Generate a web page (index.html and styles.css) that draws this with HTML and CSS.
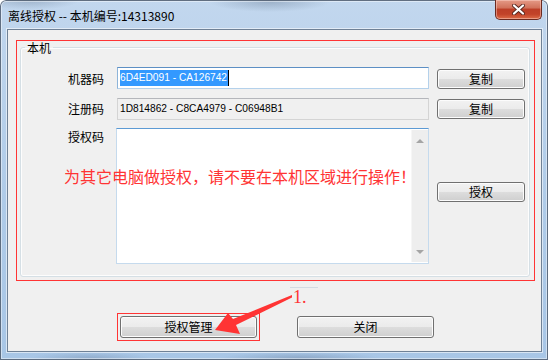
FILE: index.html
```html
<!DOCTYPE html>
<html>
    <head>
        <meta charset="UTF-8">
        <title>离线授权</title>
        <link rel="stylesheet" href="styles.css">
    </head>
    <body>
        <div class="window">
            <div class="titlebar">
                <span class="title">离线授权 -- 本机编号:14313890</span>
                <div class="close">
                    <svg width="13" height="11" viewBox="0 0 13 11">
                        <path d="M2 1.5 L11 9.5 M11 1.5 L2 9.5" stroke="#5a2a22" stroke-width="4" stroke-linecap="round"/>
                        <path d="M2 1.5 L11 9.5 M11 1.5 L2 9.5" stroke="#ffffff" stroke-width="2.2" stroke-linecap="round"/>
                    </svg>
                </div>
            </div>
            <div class="client">
                <div class="mark-box">
                    <fieldset class="group">
                        <legend>本机</legend>
                        <div class="form">
                            <label class="lbl">机器码</label>
                            <div class="field focus"><span class="sel">6D4ED091 - CA126742</span></div>
                            <button class="btn first">复制</button>

                            <label class="lbl">注册码</label>
                            <div class="field readonly">1D814862 - C8CA4979 - C06948B1</div>
                            <button class="btn">复制</button>

                            <label class="lbl top">授权码</label>
                            <div class="memo">
                                <div class="memo-body"></div>
                                <div class="vscroll">
                                    <span class="arr up"></span>
                                    <span class="arr down"></span>
                                </div>
                            </div>
                            <button class="btn mid">授权</button>
                        </div>
                    </fieldset>
                </div>
                <div class="actions">
                    <div class="mark-btn"><button class="btn wide">授权管理</button></div>
                    <button class="btn wide">关闭</button>
                </div>
            </div>

            <!-- 标注 -->
            <div class="note">为其它电脑做授权，请不要在本机区域进行操作！</div>
            <div class="step">1.</div>
            <svg class="arrow" width="548" height="360" viewBox="0 0 548 360">
                <polygon points="292,295 233,319 228,313 215,330 240,334 236,325 292,297.5" fill="#ff3434"/>
            </svg>
        </div>
    </body>
</html>
```

FILE: styles.css
```css
*{
    box-sizing: border-box;
}
body{
    margin: 0;
    font-family: "Noto Sans CJK SC", "Liberation Sans", sans-serif;
    font-size: 12px;
    color: #000;
}
.window{
    position: relative;
    width: 548px;
    height: 360px;
    overflow: hidden;
    background:
        radial-gradient(ellipse 60px 10px at 270px 2px, rgba(90,110,135,.35), transparent),
        radial-gradient(ellipse 50px 10px at 30px 0px, rgba(90,110,135,.35), transparent),
        radial-gradient(ellipse 80px 6px at 300px 358px, rgba(80,100,130,.3), transparent),
        radial-gradient(ellipse 60px 6px at 90px 358px, rgba(80,100,130,.25), transparent),
        linear-gradient(180deg, #c2d7ee 0%, #bfd5ed 30px, #afcbe8 200px, #a8c6e6 100%);
    box-shadow: inset 0 0 0 1px rgba(55,70,90,.75), inset 0 0 0 2px rgba(255,255,255,.45);
    border-radius: 6px 6px 0 0;
}
.titlebar{
    height: 29px;
    display: flex;
    justify-content: space-between;
    align-items: flex-start;
}
.title{
    padding: 9px 0 0 8px;
    line-height: 14px;
    font-size: 12px;
}
.close{
    width: 47px;
    height: 20px;
    margin-right: 6px;
    display: flex;
    align-items: center;
    justify-content: center;
    border: 1px solid #6b2a20;
    border-top: none;
    border-radius: 0 0 5px 5px;
    background: linear-gradient(180deg, #e59a86 0%, #d2735c 40%, #bd3f27 50%, #c24329 75%, #dc6c48 100%);
    box-shadow: inset 0 0 0 1px rgba(255,220,210,.45);
}
.client{
    height: 323px;
    margin: 0 6px 0 7px;
    padding: 10px 6px 0 8px;
    border: 1px solid #6f8196;
    background: #f0f0f0;
    box-shadow: 0 0 0 1px rgba(255,255,255,.55);
}
.mark-box{
    border: 1px solid #ff3434;
    padding: 0 4px 3px 3px;
}
.group{
    margin: 0;
    padding: 13px 0 12px 0;
    min-width: 0;
    border: 1px solid #d5dfe5;
    border-radius: 3px;
    box-shadow: inset 0 0 0 1px #fdfdfd;
}
.group legend{
    margin-left: 4px;
    padding: 0 2px;
    line-height: 13px;
    font-size: 12px;
}
.form{
    display: grid;
    grid-template-columns: 96px 312px 96px;
    grid-template-rows: 23px 22px 136px;
    row-gap: 8px;
}
.lbl{
    align-self: center;
    text-align: right;
    padding-right: 13px;
    line-height: 16px;
}
.lbl.top{
    align-self: start;
    line-height: 18px;
}
.field{
    height: 22px;
    align-self: start;
    padding: 2px 2px;
    font-family: "Liberation Sans", Arial, sans-serif;
    font-size: 10.2px;
    line-height: 16px;
    white-space: nowrap;
}
.field.focus{
    background: #fff;
    border: 1px solid #b4d1eb;
    border-top-color: #5d8fc4;
    border-left-color: #8db4d9;
}
.field.readonly{
    background: #f0f0f0;
    border: 1px solid #d4d4d4;
    border-top-color: #b4b6bb;
    padding-left: 2px;
}
.sel{
    display: inline-block;
    background: #3399ff;
    color: #fff;
    border-right: 1px solid #000;
    padding-right: 1px;
}
.btn{
    width: 88px;
    height: 20px;
    margin-left: 8px;
    padding: 0;
    border: 1px solid #707070;
    border-radius: 3px;
    background: linear-gradient(180deg, #f2f2f2 0%, #ebebeb 50%, #dddddd 50%, #cfcfcf 100%);
    box-shadow: inset 0 0 0 1px #fcfcfc;
    font-family: "Noto Sans CJK SC", sans-serif;
    font-size: 12px;
    line-height: 16px;
    color: #000;
    align-self: center;
}
.btn.first{
    align-self: start;
    margin-top: 2px;
}
.btn.mid{
    margin-bottom: 8px;
}
.memo{
    display: flex;
    margin-left: -1px;
    width: 313px;
    border: 1px solid #c5daed;
    border-top-color: #5c9ad4;
    background: #fff;
}
.memo-body{
    flex: 1;
}
.vscroll{
    width: 17px;
    margin: 1px 0;
    background: #eeeeee;
    border-left: 1px solid #f6f6f6;
    display: flex;
    flex-direction: column;
    justify-content: space-between;
    align-items: center;
    padding: 9px 0 8px;
}
.arr{
    width: 0;
    height: 0;
    border-left: 4px solid transparent;
    border-right: 4px solid transparent;
}
.arr.up{
    border-bottom: 4px solid #a5a5a5;
}
.arr.down{
    border-top: 4px solid #a5a5a5;
}
.actions{
    display: flex;
    justify-content: center;
    align-items: center;
    gap: 37px;
    margin-top: 32px;
}
.mark-btn{
    border: 1px solid #ff3434;
    padding: 2px;
}
.btn.wide{
    width: 137px;
    height: 22px;
    margin: 0;
}
.note{
    position: absolute;
    left: 64px;
    top: 167px;
    font-size: 16px;
    line-height: 18px;
    color: #ff3434;
    white-space: nowrap;
}
.step{
    position: absolute;
    left: 290px;
    top: 287px;
    width: 28px;
    padding-left: 3px;
    border-top: 1px solid #d3dbe3;
    font-family: "Liberation Serif", serif;
    font-size: 18px;
    line-height: 18px;
    color: #ff3434;
}
.arrow{
    position: absolute;
    left: 0;
    top: 0;
    pointer-events: none;
}
```
